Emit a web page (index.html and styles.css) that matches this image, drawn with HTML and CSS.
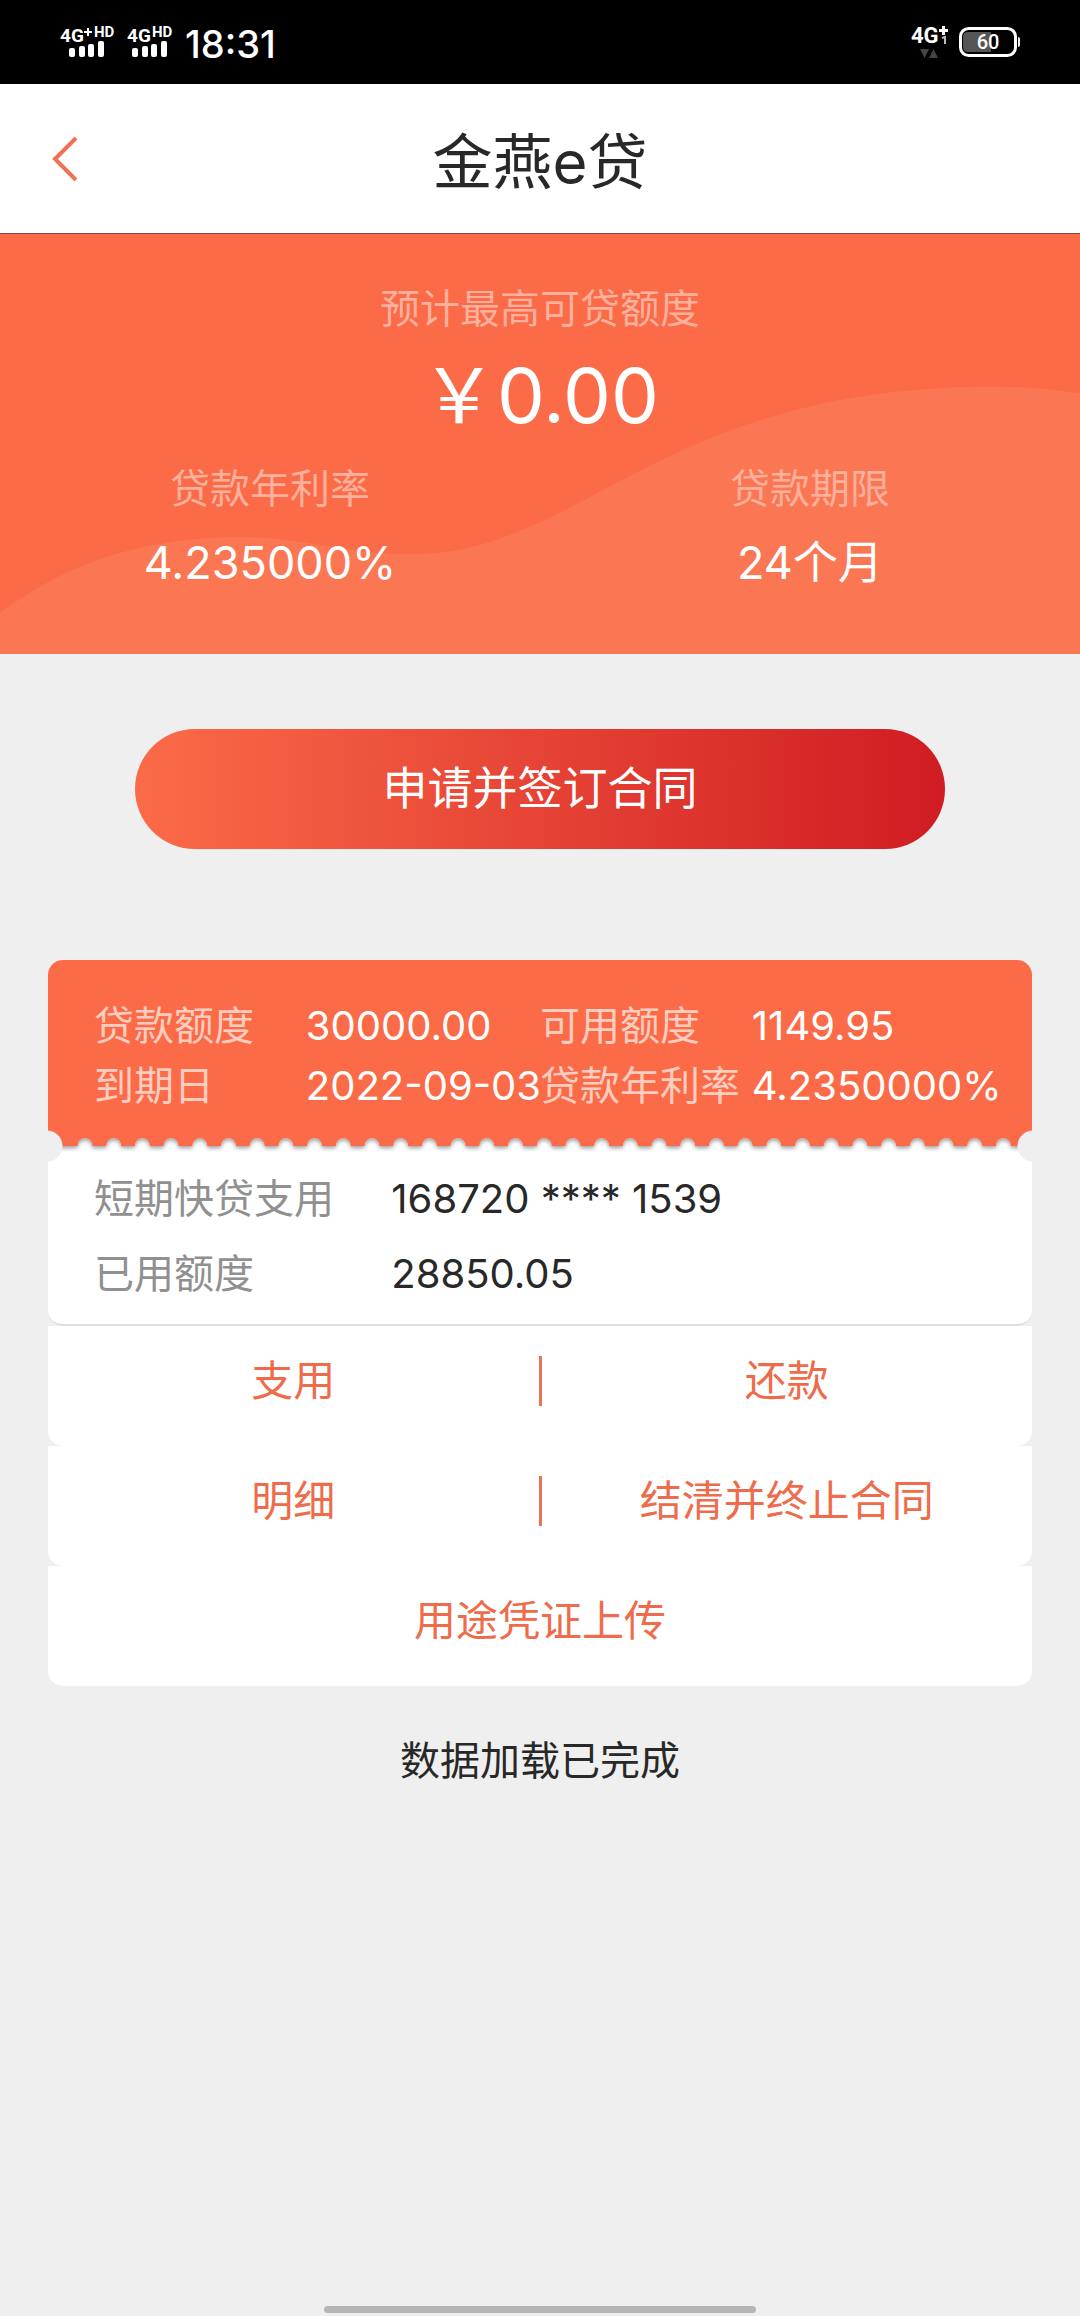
FILE: index.html
```html
<!DOCTYPE html>
<html lang="zh-CN">
<head>
<meta charset="utf-8">
<meta name="viewport" content="width=device-width, initial-scale=1">
<title>金燕e贷</title>
<link rel="stylesheet" href="styles.css">
</head>
<body>
<div class="status">
  <svg class="status-signal" width="136" height="36" viewBox="0 0 136 36" fill="#fff" aria-hidden="true">
    <g class="status-net">
      <text x="0" y="18">4G</text>
      <text class="status-hd" x="34" y="13">HD</text>
      <text x="67" y="18">4G</text>
      <text class="status-hd" x="92" y="13">HD</text>
    </g>
    <path d="M24 8h8M28 4v8" stroke="#fff" stroke-width="2"/>
    <rect x="9" y="24" width="6" height="9" rx="2"/><rect x="19" y="22" width="6" height="11" rx="2"/><rect x="28" y="20" width="6" height="13" rx="2"/><rect x="38" y="17" width="6" height="16" rx="2"/>
    <rect x="72" y="24" width="6" height="9" rx="2"/><rect x="82" y="22" width="6" height="11" rx="2"/><rect x="91" y="20" width="6" height="13" rx="2"/><rect x="101" y="17" width="6" height="16" rx="2"/>
  </svg>
  <time class="status-time">18:31</time>
  <svg class="status-battery" width="112" height="36" viewBox="-2 0 112 36" fill="#fff" aria-hidden="true">
    <text class="status-4g" x="0" y="19">4G</text>
    <path d="M28 6.500h9M32.500 2v9" stroke="#fff" stroke-width="3"/>
    <path d="M31 14l3-1v7" stroke="#bbb" stroke-width="2" fill="none"/>
    <path d="M9 25h9l-4.500 9zM18 34h9l-4.500-9z" fill="#444"/>
    <rect x="49.500" y="4.500" width="55" height="27" rx="8" fill="none" stroke="#fff" stroke-width="3"/>
    <path d="M57 8h23v20H57q-5 0-5-5V13q0-5 5-5z" fill="#555"/>
    <path d="M107 13q2 0 2 2v6q0 2-2 2z"/>
    <text class="status-level" x="77" y="25" text-anchor="middle">60</text>
  </svg>
</div>

<header class="header">
  <button class="back" type="button" aria-label="返回">
    <svg width="28" height="46" viewBox="0 0 28 46"><path d="M26 2L5 23l21 21" fill="none" stroke="#f27152" stroke-width="4"/></svg>
  </button>
  <h1 class="title">金燕e贷</h1>
  <span></span>
</header>

<section class="hero">
  <svg class="hero-wave" viewBox="0 0 1080 421" preserveAspectRatio="none" aria-hidden="true"><path d="M0 380C60 336 130 304 241 304C310 304 340 321 413 321C580 321 660 153 992 153Q1040 153 1080 160V421H0z" fill="#fb7754"/></svg>
  <p class="hero-label">预计最高可贷额度</p>
  <p class="hero-amount">&#xFFE5;0.00</p>
  <dl class="hero-terms">
    <div><dt class="hero-label">贷款年利率</dt><dd class="hero-value">4.235000%</dd></div>
    <div><dt class="hero-label">贷款期限</dt><dd class="hero-value">24个月</dd></div>
  </dl>
</section>

<main class="main">
  <button class="apply" type="button">申请并签订合同</button>

  <section class="ticket">
    <dl class="summary">
      <dt>贷款额度</dt><dd>30000.00</dd>
      <dt>可用额度</dt><dd>1149.95</dd>
      <dt>到期日</dt><dd>2022-09-03</dd>
      <dt>贷款年利率</dt><dd>4.2350000%</dd>
    </dl>
    <svg class="tear" viewBox="0 0 984 32" aria-hidden="true">
      <defs><filter id="shade" x="-1%" y="-20%" width="102%" height="180%"><feDropShadow dx="0" dy="2" stdDeviation="2" flood-color="#000" flood-opacity=".4"/></filter></defs>
      <path filter="url(#shade)" fill="#fb6b48" d="M0-6V16H29.500
        a7.500 8 0 0 1 15 0h13.700a7.500 8 0 0 1 15 0h13.700a7.500 8 0 0 1 15 0h13.700a7.500 8 0 0 1 15 0h13.700a7.500 8 0 0 1 15 0h13.700a7.500 8 0 0 1 15 0h13.700a7.500 8 0 0 1 15 0h13.700a7.500 8 0 0 1 15 0h13.700
        a7.500 8 0 0 1 15 0h13.700a7.500 8 0 0 1 15 0h13.700a7.500 8 0 0 1 15 0h13.700a7.500 8 0 0 1 15 0h13.700a7.500 8 0 0 1 15 0h13.700a7.500 8 0 0 1 15 0h13.700a7.500 8 0 0 1 15 0h13.700a7.500 8 0 0 1 15 0h13.700
        a7.500 8 0 0 1 15 0h13.700a7.500 8 0 0 1 15 0h13.700a7.500 8 0 0 1 15 0h13.700a7.500 8 0 0 1 15 0h13.700a7.500 8 0 0 1 15 0h13.700a7.500 8 0 0 1 15 0h13.700a7.500 8 0 0 1 15 0h13.700a7.500 8 0 0 1 15 0h13.700
        a7.500 8 0 0 1 15 0h13.700a7.500 8 0 0 1 15 0h13.700a7.500 8 0 0 1 15 0h13.700a7.500 8 0 0 1 15 0h13.700a7.500 8 0 0 1 15 0h13.700a7.500 8 0 0 1 15 0h13.700a7.500 8 0 0 1 15 0h13.700a7.500 8 0 0 1 15 0h13.700
        a7.500 8 0 0 1 15 0H984V-6z"/>
      <circle cx="-1" cy="16" r="15.500" fill="#efefef"/><circle cx="985" cy="16" r="15.500" fill="#efefef"/>
    </svg>
    <dl class="usage">
      <dt>短期快贷支用</dt><dd>168720 **** 1539</dd>
      <dt>已用额度</dt><dd>28850.05</dd>
    </dl>
    <div class="actions">
      <button type="button">支用</button><i class="divider"></i><button type="button">还款</button>
    </div>
    <div class="actions">
      <button type="button">明细</button><i class="divider"></i><button type="button">结清并终止合同</button>
    </div>
    <div class="actions">
      <button type="button">用途凭证上传</button>
    </div>
  </section>
  <p class="loaded">数据加载已完成</p>
</main>
<div class="home-bar"></div>
</body>
</html>
```
FILE: styles.css
```css
* {
  box-sizing: border-box;
}

body {
  margin: 0;
  min-height: 100vh;
  display: flex;
  flex-direction: column;
  background: #efefef;
  color: #282828;
  font-family: Inter, "Noto Sans CJK SC", sans-serif;
  font-size: 40px;
  line-height: 60px;
}

p, h1, dl, dd {
  margin: 0;
}

button {
  padding: 0;
  border: 0;
  background: none;
  font: inherit;
  color: inherit;
  cursor: pointer;
}

svg {
  display: block;
}

/* Status bar */
.status {
  display: flex;
  align-items: center;
  height: 84px;
  padding: 0 59px 0 60px;
  background: #000;
  color: #fff;
}

.status-time {
  margin-left: -11px;
  padding-top: 4px;
  font-size: 38px;
  font-weight: 500;
  line-height: 36px;
}

.status-battery {
  margin-left: auto;
}

.status-net {
  font: 700 19px Roboto, sans-serif;
}

.status-hd {
  font-size: 15px;
}

.status-4g {
  font: 700 22px Roboto, sans-serif;
}

.status-level {
  font: 500 20px Roboto, sans-serif;
}

/* Title bar */
.header {
  display: grid;
  grid-template-columns: 1fr auto 1fr;
  align-items: center;
  height: 150px;
  padding: 0 50px;
  background: #fff;
  border-bottom: 1px solid #7d4a40;
}

.back {
  justify-self: start;
}

.title {
  padding-top: 6px;
  font-size: 60px;
  line-height: 80px;
  font-weight: 400;
}

/* Loan overview */
.hero {
  position: relative;
  padding: 45px 0 61px;
  background: #fb6b48;
  color: #fff;
  text-align: center;
}

.hero-wave {
  position: absolute;
  inset: 0;
  width: 100%;
  height: 100%;
}

.hero > :not(svg) {
  position: relative;
}

.hero-label {
  color: #fdb09b;
}

.hero-amount {
  height: 120px;
  font-size: 76px;
  line-height: 112px;
}

.hero-terms {
  display: grid;
  grid-template-columns: 1fr 1fr;
}

.hero-value {
  padding-top: 14px;
  font-size: 45px;
}

/* Content */
.main {
  flex: 1;
  padding: 75px 48px;
}

.apply {
  display: block;
  width: calc(100% - 174px);
  height: 120px;
  margin: 0 auto 111px;
  border-radius: 60px;
  background: linear-gradient(90deg, #fb6b48, #d01c22);
  color: #fff;
  font-size: 45px;
}

.summary {
  display: grid;
  grid-template-columns: 19fr 21fr 19fr 21fr;
  padding: 36px 46px 14px;
  border-radius: 15px 15px 0 0;
  background: #fb6b48;
  color: #fff;
  white-space: nowrap;
}

.summary dt {
  color: #fecdc0;
}

.summary dd,
.hero-terms > div {
  min-width: 0;
}

.tear {
  width: 100%;
  background: #fff;
}

.usage {
  display: grid;
  grid-template-columns: 1fr 2fr;
  row-gap: 15px;
  padding: 7px 46px 20px;
  background: #fff;
  border-bottom: 2px solid #dfdfdf;
  border-radius: 0 0 15px 15px;
}

.usage dt {
  color: #909090;
}

.actions {
  display: flex;
  height: 120px;
  padding-bottom: 10px;
  align-items: center;
  background: #fff;
  border-radius: 0 0 15px 15px;
  color: #ee6c4b;
  font-size: 42px;
}

.actions button {
  flex: 1;
}

.divider {
  width: 3px;
  height: 50px;
  background: #e57556;
}

.loaded {
  margin-top: 45px;
  text-align: center;
}

.home-bar {
  width: 40%;
  height: 7px;
  margin: 0 auto 3px;
  border-radius: 4px;
  background: #b5b5b5;
}
```
